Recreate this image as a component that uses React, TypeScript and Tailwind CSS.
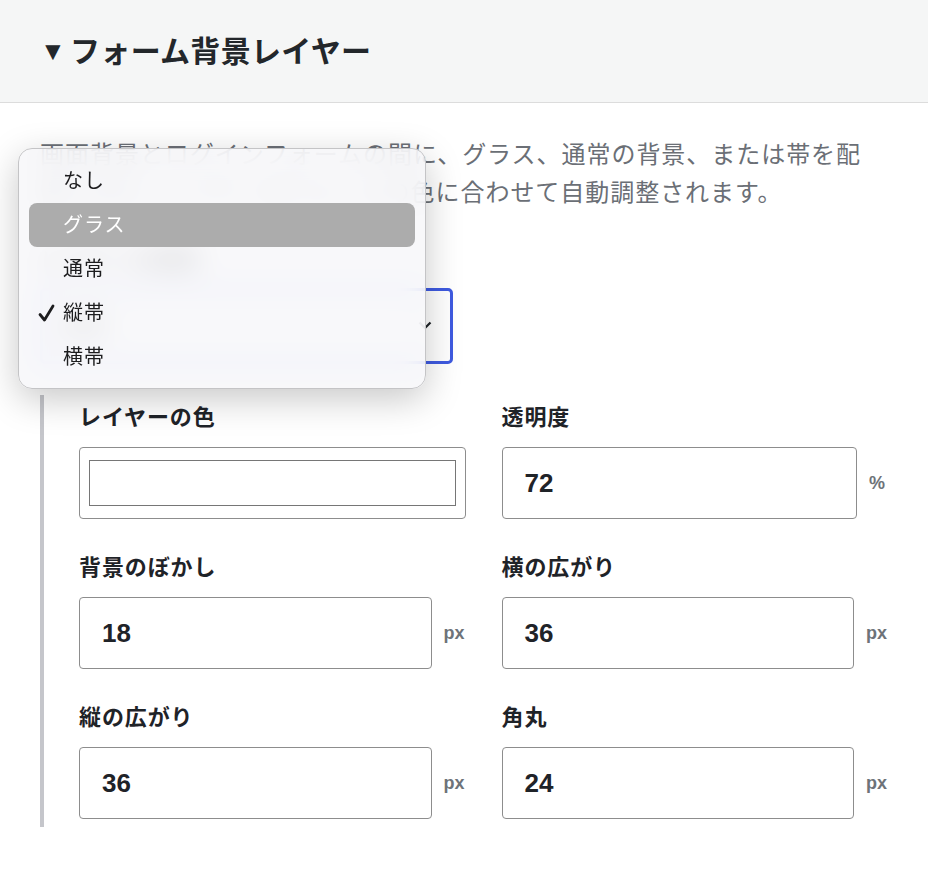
import React from "react";

type Field = {
  label: string;
  value?: string;
  unit?: string;
  color?: boolean;
};

const fields: Field[] = [
  { label: "レイヤーの色", color: true },
  { label: "透明度", value: "72", unit: "%" },
  { label: "背景のぼかし", value: "18", unit: "px" },
  { label: "横の広がり", value: "36", unit: "px" },
  { label: "縦の広がり", value: "36", unit: "px" },
  { label: "角丸", value: "24", unit: "px" },
];

const options = ["なし", "グラス", "通常", "縦帯", "横帯"];

function FieldCell({ field }: { field: Field }) {
  return (
    <div className="flex flex-col gap-[13px]">
      <label className="h-[32px] text-[22px] leading-[32px] font-bold tracking-[0.04em] text-[#1f2328]">
        {field.label}
      </label>
      {field.color ? (
        <div className="h-[72px] rounded-[4px] border border-[#8d8d8d] bg-white px-[9px] py-[12px]">
          <div className="h-full w-full border border-[#767676] bg-white" />
        </div>
      ) : (
        <div className="flex items-center gap-[12px]">
          <div className="flex h-[72px] flex-1 items-center rounded-[4px] border border-[#8d8d8d] bg-white pl-[22px] text-[26px] font-bold text-[#1f2328]">
            {field.value}
          </div>
          <span
            className={`text-[18px] font-bold text-[#6e7379] ${field.unit === "%" ? "w-[19px]" : "w-[22px]"}`}
          >
            {field.unit}
          </span>
        </div>
      )}
    </div>
  );
}

function OptionMenu({ selected, active }: { selected: string; active: string }) {
  return (
    <div className="absolute left-[18px] top-[148px] w-[408px] rounded-[14px] border border-[#c4c4c6] bg-[#f7f7f9]/85 px-[10px] pt-[10px] pb-[9px] shadow-[0_10px_36px_rgba(0,0,0,0.22)] backdrop-blur-[14px]">
      {options.map((o) => (
        <div
          key={o}
          className={`relative flex h-[44px] items-center rounded-[8px] pl-[34px] text-[20px] tracking-[0.05em] ${
            o === active ? "bg-[#acacac] text-white" : "text-[#1d1d1f]"
          }`}
        >
          {o === selected && (
            <svg
              className="absolute left-[9px] top-[13px]"
              width="17"
              height="18"
              viewBox="0 0 17 18"
              fill="none"
            >
              <path
                d="M2 10.5 L6.5 16 L15 2"
                stroke="#1d1d1f"
                strokeWidth="2.8"
                strokeLinecap="round"
                strokeLinejoin="round"
              />
            </svg>
          )}
          {o}
        </div>
      ))}
    </div>
  );
}

export default function App() {
  return (
    <div className="relative h-[874px] w-[928px] overflow-hidden bg-white font-['Liberation_Sans','Noto_Sans_CJK_JP',sans-serif]">
      {/* section header */}
      <div className="flex h-[103px] items-center border-b border-[#dcdcdc] bg-[#f5f6f6] px-[40px]">
        <h2 className="text-[30px] font-bold tracking-[0.01em] text-[#23272b]">
          <span className="mr-[4px] text-[26px] align-[2px]">▼</span>フォーム背景レイヤー
        </h2>
      </div>

      <div className="px-[40px] pt-[33px]">
        <p className="max-w-[830px] text-[24px] leading-[38px] tracking-[0.04em] text-[#6b6f76]">
          画面背景とログインフォームの間に、グラス、通常の背景、または帯を配置します。レイヤーはフォームの色に合わせて自動調整されます。
        </p>

        <label className="mt-[32px] block h-[32px] text-[22px] leading-[32px] font-bold tracking-[0.04em] text-[#1f2328]">
          レイヤーの種類
        </label>
        <div className="relative mt-[12px] flex h-[76px] w-[413px] items-center rounded-[5px] border-[3px] border-[#3e5ae0] bg-white pl-[20px] text-[22px] text-[#1f2328]">
          縦帯
          <svg
            className="absolute right-[18px] top-[30px]"
            width="14"
            height="9"
            viewBox="0 0 14 9"
            fill="none"
          >
            <path d="M1.5 1.5 L7 7 L12.5 1.5" stroke="#1f2328" strokeWidth="2.2" />
          </svg>
        </div>

        {/* nested settings */}
        <div className="mt-[31px] border-l-4 border-[#c5c6cb] pt-[7px] pb-[8px] pl-[35px]">
          <div className="grid grid-cols-2 gap-x-[36px] gap-y-[33px]">
            {fields.map((f) => (
              <FieldCell key={f.label} field={f} />
            ))}
          </div>
        </div>
      </div>

      <OptionMenu selected="縦帯" active="グラス" />
    </div>
  );
}
